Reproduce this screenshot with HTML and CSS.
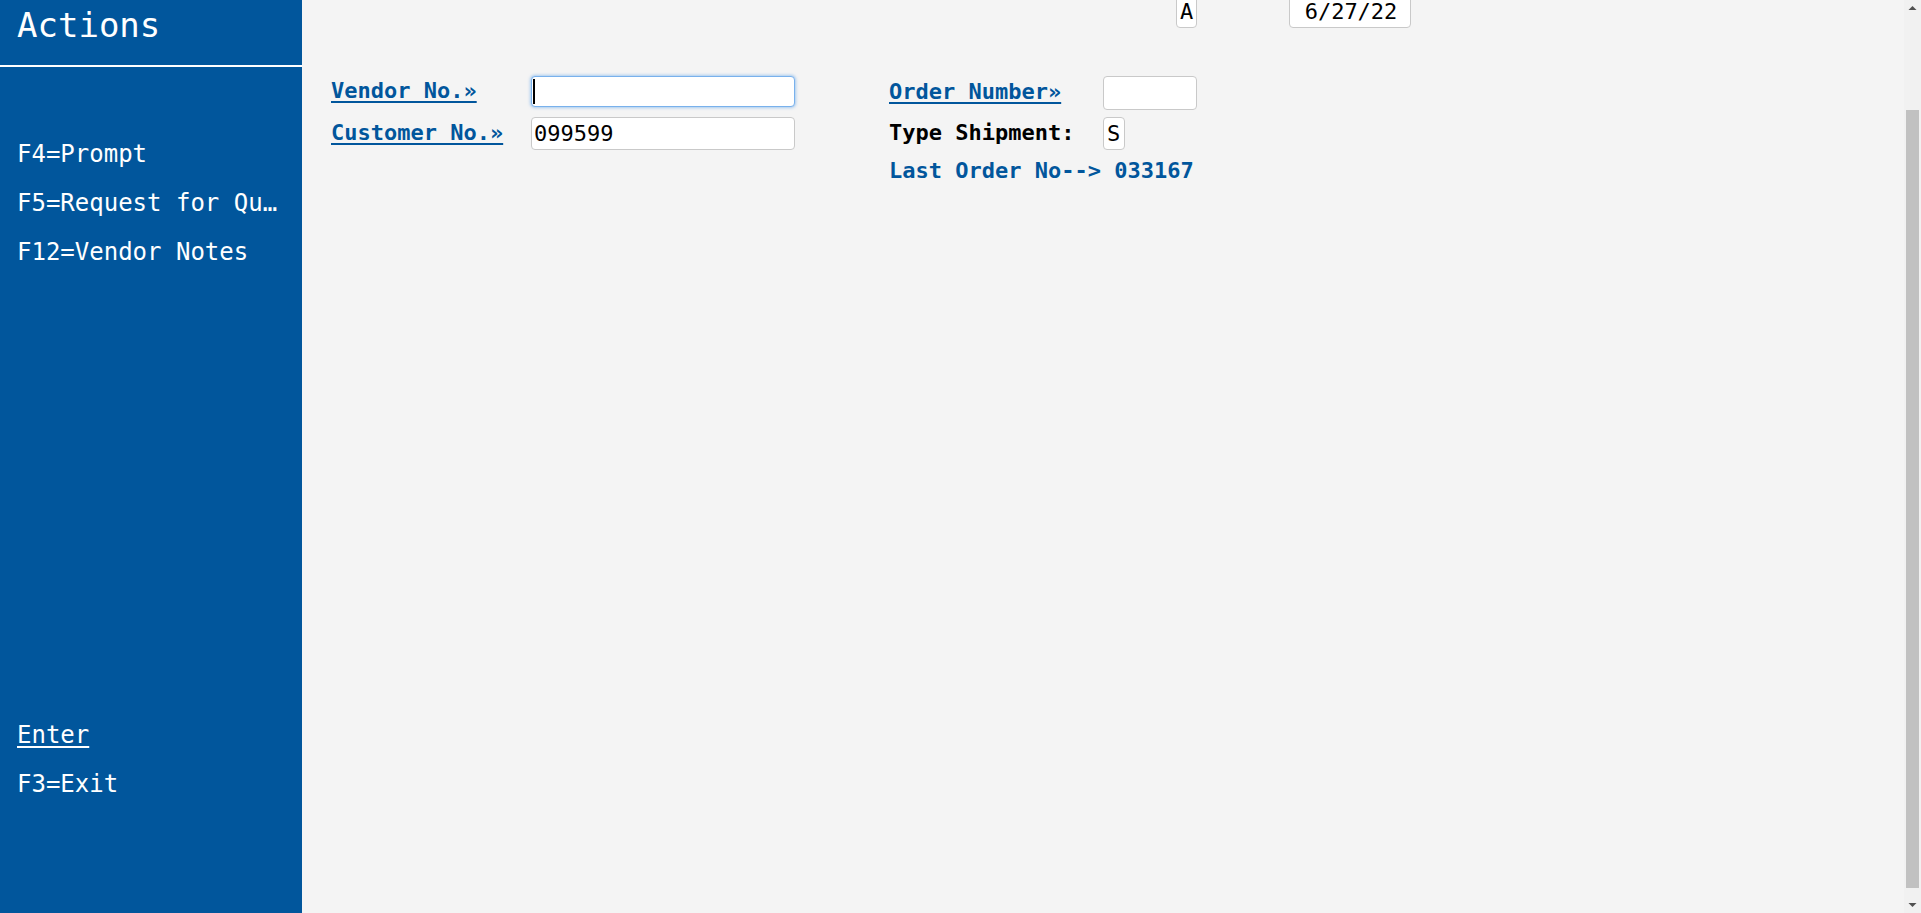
FILE: index.html
```html
<!DOCTYPE html>
<html lang="en">
<head>
<meta charset="utf-8">
<title>Vendor Order</title>
<link rel="stylesheet" href="styles.css">
<script src="app.js" defer></script>
</head>
<body>
<div class="app">
  <aside class="sidebar">
    <div class="sidebar-title">Actions</div>
    <ul class="menu">
      <li>F4=Prompt</li>
      <li>F5=Request for Quote</li>
      <li>F12=Vendor Notes</li>
    </ul>
    <ul class="menu menu-bottom">
      <li class="menu-link">Enter</li>
      <li>F3=Exit</li>
    </ul>
  </aside>
  <main class="main">
    <div class="viewport" id="viewport">
      <div class="content">
        <div class="top-row">
          <input class="fld fld-a" value="A">
          <input class="fld fld-date" value="6/27/22">
        </div>
        <div class="form">
          <div class="group group-left">
            <a class="lbl" href="#">Vendor No.»</a>
            <span class="fld-wrap"><input class="fld fld-vendor focused"><span class="caret"></span></span>
            <a class="lbl" href="#">Customer No.»</a>
            <input class="fld fld-customer" value="099599">
          </div>
          <div class="group group-right">
            <a class="lbl" href="#">Order Number»</a>
            <input class="fld fld-order">
            <span class="lbl-plain">Type Shipment:</span>
            <input class="fld fld-s" value="S">
            <div class="last">Last Order No--&gt; 033167</div>
          </div>
        </div>
      </div>
    </div>
    <div class="scrollbar">
      <div class="sb-btn">
        <svg width="17" height="17" viewBox="0 0 17 17"><path d="M4.5 10h8L8.5 6z" fill="#505050"/></svg>
      </div>
      <div class="sb-track">
        <div class="sb-thumb"></div>
      </div>
      <div class="sb-btn">
        <svg width="17" height="17" viewBox="0 0 17 17"><path d="M4.5 7h8L8.5 11z" fill="#505050"/></svg>
      </div>
    </div>
  </main>
</div>
</body>
</html>
```

FILE: app.js
```js
document.getElementById('viewport').scrollTop = 109;
```

FILE: styles.css
```css
html, body {
  margin: 0;
  padding: 0;
  height: 100%;
  overflow: hidden;
}
body {
  font-family: "DejaVu Sans Mono", "Liberation Mono", monospace;
  background: #f4f4f4;
}
.app {
  display: flex;
  height: 100vh;
}
.sidebar {
  width: 302px;
  flex: 0 0 302px;
  background: #01569c;
  color: #ffffff;
  display: flex;
  flex-direction: column;
}
.sidebar-title {
  height: 67px;
  box-sizing: border-box;
  padding: 5px 0 0 17px;
  font-size: 34px;
  line-height: 40px;
  border-bottom: 2px solid #ffffff;
}
.menu {
  list-style: none;
  margin: 0;
  padding: 63px 23px 0 17px;
  font-size: 24px;
  line-height: 49px;
}
.menu li {
  white-space: nowrap;
  overflow: hidden;
  text-overflow: ellipsis;
}
.menu-bottom {
  margin-top: auto;
  padding-top: 0;
  padding-bottom: 104px;
}
.menu-link {
  text-decoration: underline;
  text-decoration-thickness: 2px;
  text-underline-offset: 3px;
}
.main {
  flex: 1;
  display: flex;
  height: 100vh;
  min-width: 0;
  background: #f4f4f4;
}
.viewport {
  flex: 1;
  min-width: 0;
  height: 100%;
  overflow: hidden;
}
.scrollbar {
  width: 17px;
  flex: 0 0 17px;
  display: flex;
  flex-direction: column;
  background: #f1f1f1;
}
.sb-btn {
  height: 17px;
  flex: 0 0 17px;
}
.sb-btn svg {
  display: block;
}
.sb-track {
  flex: 1;
  padding-top: 93px;
}
.sb-thumb {
  height: 778px;
  margin: 0 2px;
  background: #c1c1c1;
}
.content {
  height: 1032px;
  box-sizing: border-box;
  padding-top: 104px;
}
.top-row {
  display: flex;
  gap: 92px;
  padding-left: 874px;
  height: 33px;
}
.fld {
  font-family: "DejaVu Sans Mono", "Liberation Mono", monospace;
  font-size: 22px;
  color: #000000;
  background: #ffffff;
  border: 1px solid #c9c9c9;
  border-radius: 4px;
  box-sizing: border-box;
  padding: 0 2px;
  margin: 0;
  outline: none;
}
.fld-a {
  width: 21px;
  height: 33px;
  padding: 0;
  text-align: center;
}
.fld-date {
  width: 122px;
  height: 33px;
  padding-left: 4px;
  text-align: center;
}
.form {
  display: flex;
  margin-top: 48px;
  padding-left: 29px;
  align-items: flex-start;
}
.group {
  display: grid;
  align-items: center;
}
.group-left {
  grid-template-columns: 200px 264px;
  grid-template-rows: 31px 33px;
  row-gap: 10px;
}
.group-right {
  margin-left: 94px;
  grid-template-columns: 214px auto;
  grid-template-rows: 34px 33px 26px;
  row-gap: 7px;
}
.lbl {
  color: #01569c;
  font-weight: bold;
  font-size: 22px;
  line-height: 26px;
  text-decoration: underline;
  text-decoration-thickness: 2px;
  text-underline-offset: 3px;
  justify-self: start;
  margin-top: -2px;
}
.lbl-plain {
  color: #000000;
  font-weight: bold;
  font-size: 22px;
  line-height: 26px;
  margin-top: -2px;
}
.fld-wrap {
  position: relative;
  display: block;
  height: 31px;
}
.fld-vendor {
  width: 264px;
  height: 31px;
}
.fld-vendor.focused {
  border-color: #79b1ec;
  box-shadow: 0 0 3px 1px rgba(100, 165, 235, 0.55);
}
.caret {
  position: absolute;
  left: 2px;
  top: 3px;
  width: 2px;
  height: 25px;
  background: #000000;
}
.fld-customer {
  width: 264px;
  height: 33px;
}
.fld-order {
  width: 94px;
  height: 34px;
}
.fld-s {
  width: 22px;
  height: 33px;
  padding: 0 0 0 3px;
}
.last {
  grid-column: 1 / span 2;
  color: #01569c;
  font-weight: bold;
  font-size: 22px;
  line-height: 26px;
  white-space: nowrap;
  margin-top: 1px;
}
```
